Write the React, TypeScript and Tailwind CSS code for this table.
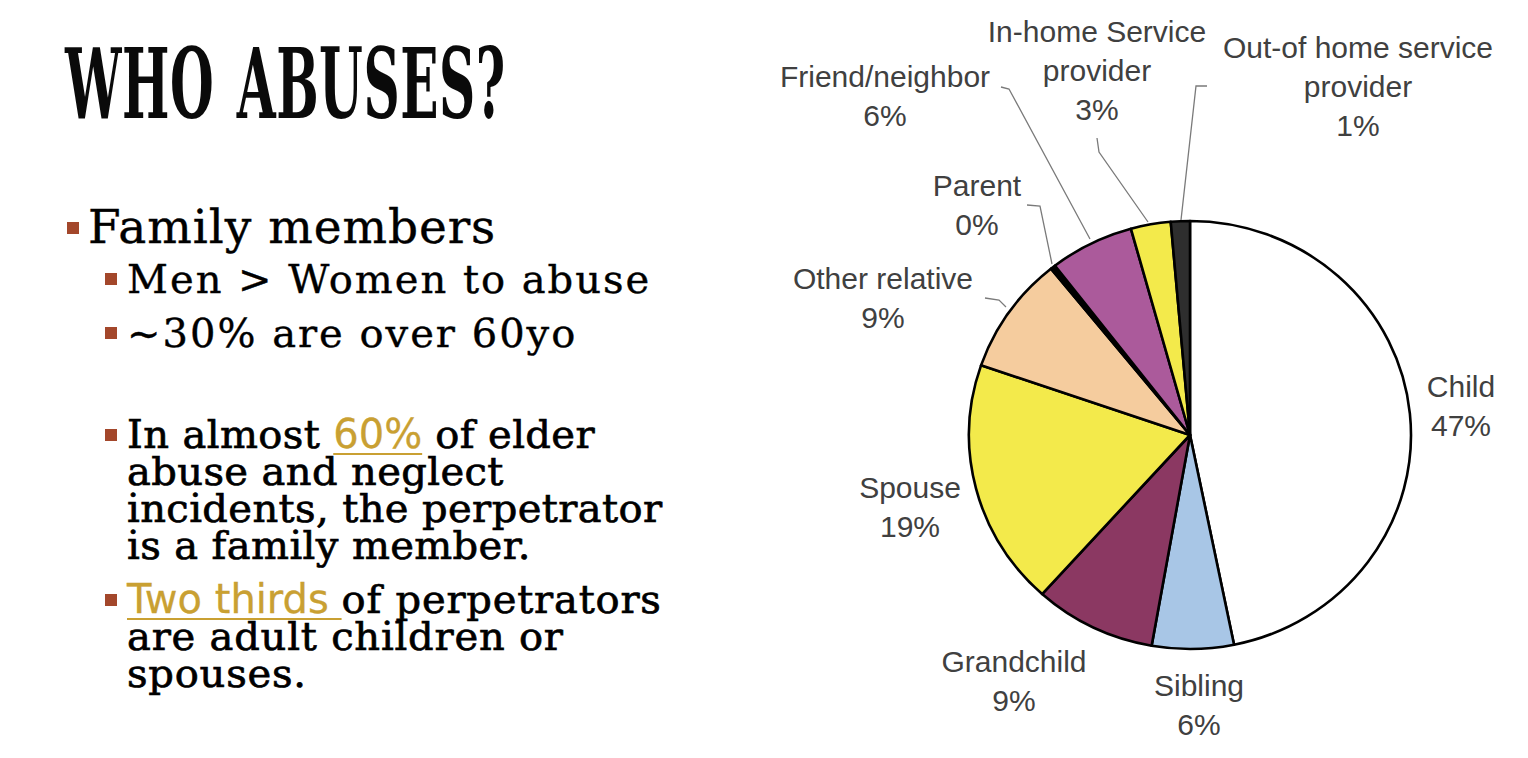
import type { ReactNode } from "react";

type Slice = { from: number; to: number; fill: string };

// Angles in degrees, clockwise from 12 o'clock.
const slices: Slice[] = [
  { from: 0, to: 168.5, fill: "#ffffff" },
  { from: 168.5, to: 190, fill: "#a8c6e6" },
  { from: 190, to: 222, fill: "#8b3862" },
  { from: 222, to: 289, fill: "#f3ea4b" },
  { from: 289, to: 321, fill: "#f5cc9e" },
  { from: 321, to: 322.3, fill: "#000000" },
  { from: 322.3, to: 344.5, fill: "#ab5a9b" },
  { from: 344.5, to: 355, fill: "#f3ea4b" },
  { from: 355, to: 360, fill: "#2e2e2e" },
];

const CX = 1190;
const CY = 435;
const RX = 221;
const RY = 214;

function point(deg: number) {
  const r = (deg * Math.PI) / 180;
  return [CX + RX * Math.sin(r), CY - RY * Math.cos(r)];
}

function slicePath({ from, to }: Slice) {
  const [x1, y1] = point(from);
  const [x2, y2] = point(to);
  const large = to - from > 180 ? 1 : 0;
  return `M${CX} ${CY} L${x1} ${y1} A${RX} ${RY} 0 ${large} 1 ${x2} ${y2} Z`;
}

type Label = { x: number; y: number; lines: string[] };

const labels: Label[] = [
  { x: 1097, y: 42, lines: ["In-home Service", "provider", "3%"] },
  { x: 1358, y: 58, lines: ["Out-of home service", "provider", "1%"] },
  { x: 885, y: 87, lines: ["Friend/neighbor", "6%"] },
  { x: 977, y: 196, lines: ["Parent", "0%"] },
  { x: 883, y: 289, lines: ["Other relative", "9%"] },
  { x: 1461, y: 397, lines: ["Child", "47%"] },
  { x: 910, y: 498, lines: ["Spouse", "19%"] },
  { x: 1014, y: 672, lines: ["Grandchild", "9%"] },
  { x: 1199, y: 696, lines: ["Sibling", "6%"] },
];

// Leader lines from the small labels to their slices.
const leaders = [
  "M1001 87 L1009 89 L1090 239",
  "M1097 138 L1099 152 L1148 222",
  "M1207 86 L1196 86 L1181 220",
  "M1027 205 L1040 206 L1052 264",
  "M985 298 L999 300 L1006 307",
];

function PieChart() {
  return (
    <svg
      viewBox="748 0 780 758"
      className="h-[758px] w-[780px] shrink-0"
      style={{ fontFamily: '"Liberation Sans", Arial, sans-serif' }}
    >
      {slices.map((s, i) => (
        <path
          key={i}
          d={slicePath(s)}
          fill={s.fill}
          stroke="#000"
          strokeWidth={2.6}
          strokeLinejoin="round"
        />
      ))}
      {leaders.map((d) => (
        <path key={d} d={d} fill="none" stroke="#7a7a7a" strokeWidth={1.3} />
      ))}
      {labels.map((l) => (
        <text
          key={l.lines[0]}
          x={l.x}
          y={l.y}
          textAnchor="middle"
          fontSize={30}
          fill="#404040"
        >
          {l.lines.map((line, i) => (
            <tspan key={i} x={l.x} dy={i === 0 ? 0 : 39}>
              {line}
            </tspan>
          ))}
        </text>
      ))}
    </svg>
  );
}

function Square({ className = "" }: { className?: string }) {
  return (
    <span
      className={`inline-block h-[12px] w-[12px] shrink-0 bg-[#a3472b] ${className}`}
    />
  );
}

function Gold({ children }: { children: ReactNode }) {
  return (
    <span className="tracking-normal text-[#c9a032] underline decoration-[#c9a032] decoration-2 underline-offset-[5px] [-webkit-text-stroke:0.3px_#c9a032] [font-family:'DejaVu_Sans',sans-serif]">
      {children}
    </span>
  );
}

export default function App() {
  return (
    <div className="flex h-[758px] w-[1528px] overflow-hidden bg-white text-black">
      <div className="flex w-[748px] shrink-0 flex-col pl-[65px] [font-family:'DejaVu_Serif',serif]">
        <h1 className="mt-[36px] h-[97px] origin-left scale-x-[0.575] whitespace-nowrap text-[97px] leading-none font-bold tracking-[0.01em] text-[#0a0a0a] [word-spacing:0.08em] [font-family:'DejaVu_Serif_Condensed','DejaVu_Serif',serif]">
          WHO ABUSES?
        </h1>

        <ul className="mt-[69px] flex flex-col [-webkit-text-stroke:0.4px_black]">
          <li className="flex items-start gap-[9px] text-[47px] leading-[50px] tracking-[0.02em]">
            <Square className="mt-[20px] ml-[2px]" />
            <span>Family members</span>
          </li>
          <li className="ml-[40px] flex items-start gap-[10px] text-[40px] leading-[54px] tracking-[0.05em]">
            <Square className="mt-[21px]" />
            <span>Men &gt; Women to abuse</span>
          </li>
          <li className="ml-[40px] flex items-start gap-[10px] text-[40px] leading-[54px] tracking-[0.05em]">
            <Square className="mt-[21px]" />
            <span>~30% are over 60yo</span>
          </li>
        </ul>

        <ul className="mt-[56px] ml-[40px] flex w-[620px] flex-col gap-[17px] text-[40px] leading-[37px] tracking-[0.01em] [-webkit-text-stroke:0.7px_black]">
          <li className="flex items-start gap-[10px]">
            <Square className="mt-[13px]" />
            <span className="whitespace-nowrap">
              In almost <Gold>60%</Gold> of elder
              <br />
              abuse and neglect
              <br />
              incidents, the perpetrator
              <br />
              is a family member.
            </span>
          </li>
          <li className="flex items-start gap-[10px]">
            <Square className="mt-[13px]" />
            <span className="whitespace-nowrap tracking-[0.02em]">
              <Gold>Two thirds </Gold>of perpetrators
              <br />
              are adult children or
              <br />
              spouses.
            </span>
          </li>
        </ul>
      </div>

      <PieChart />
    </div>
  );
}
